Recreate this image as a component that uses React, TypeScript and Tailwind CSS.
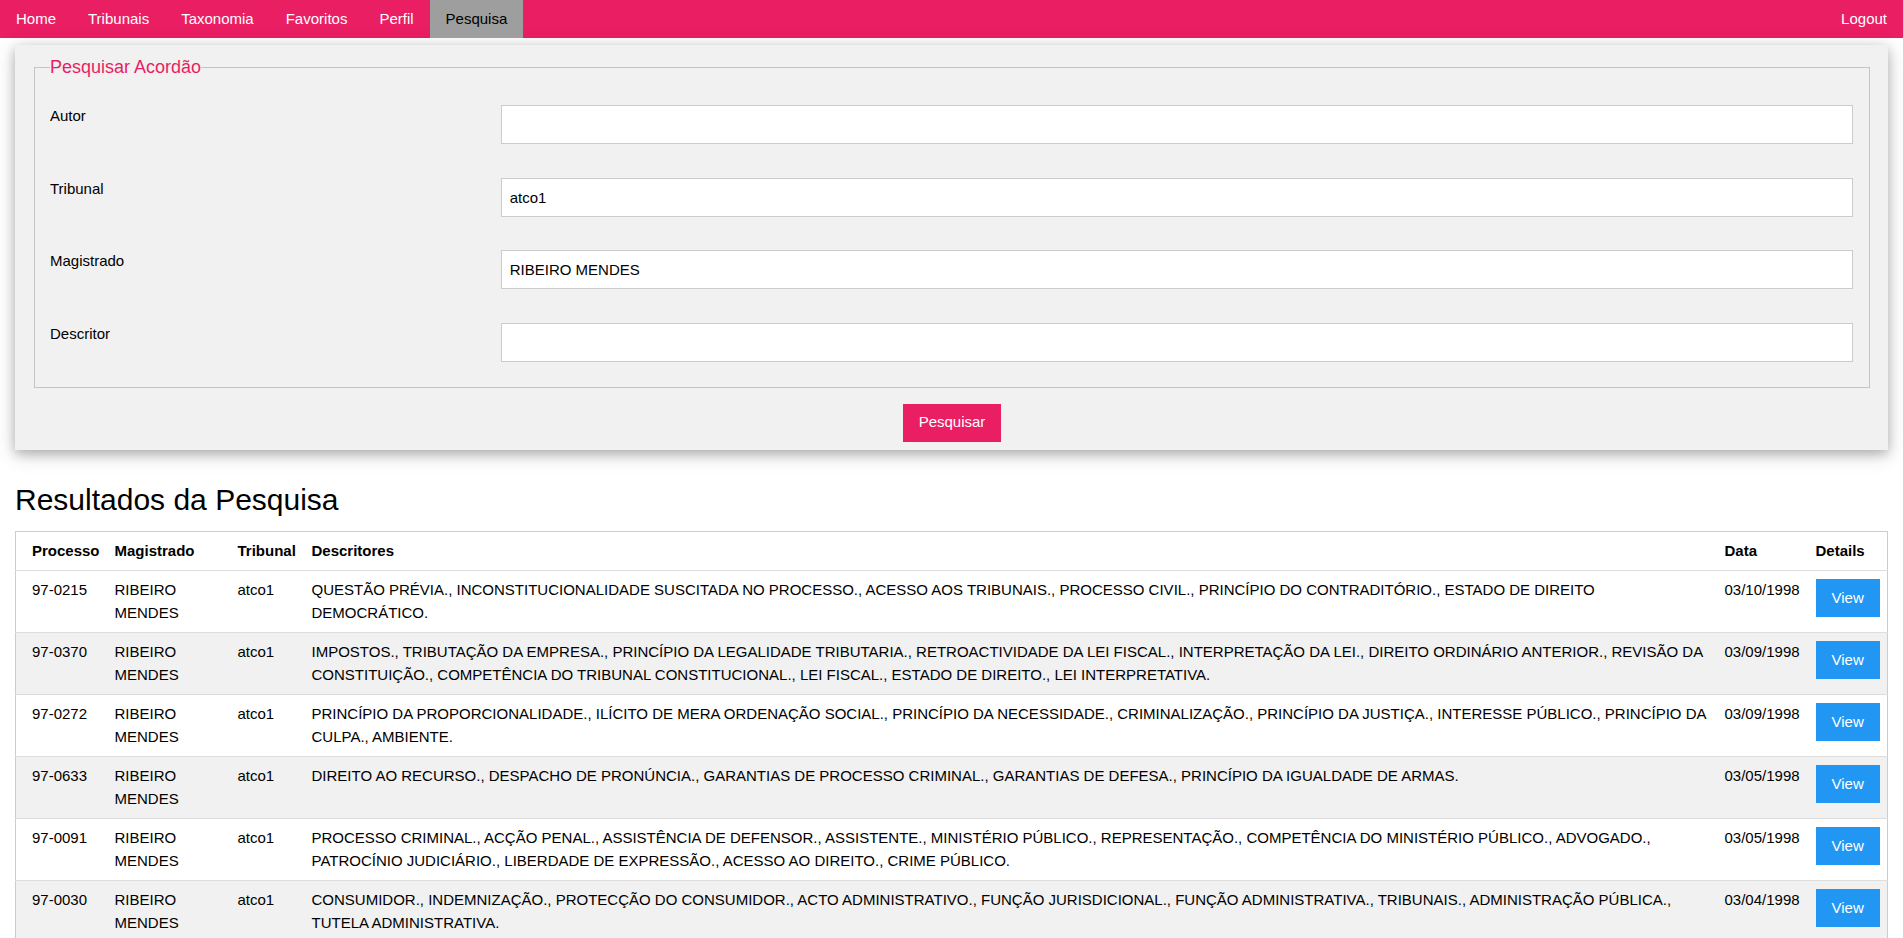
import React from 'react';

const navItems = ['Home', 'Tribunais', 'Taxonomia', 'Favoritos', 'Perfil', 'Pesquisa'];

const fields = [
  { label: 'Autor', value: '' },
  { label: 'Tribunal', value: 'atco1' },
  { label: 'Magistrado', value: 'RIBEIRO MENDES' },
  { label: 'Descritor', value: '' },
];

const results = [
  {
    processo: '97-0215',
    descritores:
      'QUESTÃO PRÉVIA., INCONSTITUCIONALIDADE SUSCITADA NO PROCESSO., ACESSO AOS TRIBUNAIS., PROCESSO CIVIL., PRINCÍPIO DO CONTRADITÓRIO., ESTADO DE DIREITO DEMOCRÁTICO.',
    data: '03/10/1998',
  },
  {
    processo: '97-0370',
    descritores:
      'IMPOSTOS., TRIBUTAÇÃO DA EMPRESA., PRINCÍPIO DA LEGALIDADE TRIBUTARIA., RETROACTIVIDADE DA LEI FISCAL., INTERPRETAÇÃO DA LEI., DIREITO ORDINÁRIO ANTERIOR., REVISÃO DA CONSTITUIÇÃO., COMPETÊNCIA DO TRIBUNAL CONSTITUCIONAL., LEI FISCAL., ESTADO DE DIREITO., LEI INTERPRETATIVA.',
    data: '03/09/1998',
  },
  {
    processo: '97-0272',
    descritores:
      'PRINCÍPIO DA PROPORCIONALIDADE., ILÍCITO DE MERA ORDENAÇÃO SOCIAL., PRINCÍPIO DA NECESSIDADE., CRIMINALIZAÇÃO., PRINCÍPIO DA JUSTIÇA., INTERESSE PÚBLICO., PRINCÍPIO DA CULPA., AMBIENTE.',
    data: '03/09/1998',
  },
  {
    processo: '97-0633',
    descritores:
      'DIREITO AO RECURSO., DESPACHO DE PRONÚNCIA., GARANTIAS DE PROCESSO CRIMINAL., GARANTIAS DE DEFESA., PRINCÍPIO DA IGUALDADE DE ARMAS.',
    data: '03/05/1998',
  },
  {
    processo: '97-0091',
    descritores:
      'PROCESSO CRIMINAL., ACÇÃO PENAL., ASSISTÊNCIA DE DEFENSOR., ASSISTENTE., MINISTÉRIO PÚBLICO., REPRESENTAÇÃO., COMPETÊNCIA DO MINISTÉRIO PÚBLICO., ADVOGADO., PATROCÍNIO JUDICIÁRIO., LIBERDADE DE EXPRESSÃO., ACESSO AO DIREITO., CRIME PÚBLICO.',
    data: '03/05/1998',
  },
  {
    processo: '97-0030',
    descritores:
      'CONSUMIDOR., INDEMNIZAÇÃO., PROTECÇÃO DO CONSUMIDOR., ACTO ADMINISTRATIVO., FUNÇÃO JURISDICIONAL., FUNÇÃO ADMINISTRATIVA., TRIBUNAIS., ADMINISTRAÇÃO PÚBLICA., TUTELA ADMINISTRATIVA.',
    data: '03/04/1998',
  },
];

const App: React.FC = () => {
  return (
    <div className="min-h-screen bg-white text-[15px] leading-[1.5] text-black font-['Liberation_Sans',Arial,sans-serif]">
      {/* Top bar */}
      <div className="flex bg-[#e91e63] text-white">
        {navItems.map(item => (
          <a
            key={item}
            className={`px-4 py-2 h-[38px] cursor-pointer ${item === 'Pesquisa' ? 'bg-[#9e9e9e] text-black' : ''}`}
          >
            {item}
          </a>
        ))}
        <a className="ml-auto px-4 py-2 h-[38px] cursor-pointer">Logout</a>
      </div>

      {/* Search panel */}
      <div className="mx-[15px] mt-[7px] bg-[#f1f1f1] pl-[19px] pr-[18px] pt-[9px] pb-[8px] shadow-[0_4px_10px_0_rgba(0,0,0,0.2),0_4px_20px_0_rgba(0,0,0,0.19)]">
        <fieldset className="border border-[#c4c4c4] pl-[15px] pr-4 pt-[24px] pb-[25px]">
          <legend className="px-0 text-[18px] leading-[27px] text-[#e91e63]">Pesquisar Acordão</legend>
          <div className="flex flex-col gap-[33.5px]">
            {fields.map(f => (
              <div key={f.label} className="grid grid-cols-4 items-start">
                <label className="col-span-1">{f.label}</label>
                <input
                  defaultValue={f.value}
                  className="col-span-3 h-[39px] border border-[#ccc] bg-white px-2 outline-none"
                />
              </div>
            ))}
          </div>
        </fieldset>
        <div className="flex justify-center mt-[16px]">
          <button className="h-[38px] bg-[#e91e63] px-4 text-white">Pesquisar</button>
        </div>
      </div>

      {/* Results */}
      <h2 className="mx-[15px] mt-[27px] mb-[9px] text-[30px] leading-[45px]">Resultados da Pesquisa</h2>
      <div className="mx-[15px]">
        <table className="w-full table-fixed border-collapse border border-[#ccc]">
          <thead>
            <tr className="border-b border-[#ddd] bg-white text-left">
              <th className="w-[91px] py-2 pl-4 pr-2 align-top font-bold">Processo</th>
              <th className="w-[123px] p-2 align-top font-bold">Magistrado</th>
              <th className="w-[74px] p-2 align-top font-bold">Tribunal</th>
              <th className="p-2 align-top font-bold">Descritores</th>
              <th className="w-[91px] p-2 align-top font-bold">Data</th>
              <th className="w-[80px] p-2 align-top font-bold">Details</th>
            </tr>
          </thead>
          <tbody>
            {results.map((r, i) => (
              <tr key={r.processo} className={`border-b border-[#ddd] ${i % 2 === 1 ? 'bg-[#f1f1f1]' : 'bg-white'}`}>
                <td className="py-2 pl-4 pr-2 align-top">{r.processo}</td>
                <td className="p-2 align-top">RIBEIRO MENDES</td>
                <td className="p-2 align-top">atco1</td>
                <td className="p-2 align-top">{r.descritores}</td>
                <td className="p-2 align-top">{r.data}</td>
                <td className="p-2 align-top">
                  <button className="h-[38px] bg-[#2196f3] px-4 text-white">View</button>
                </td>
              </tr>
            ))}
          </tbody>
        </table>
      </div>
    </div>
  );
};

export default App;
